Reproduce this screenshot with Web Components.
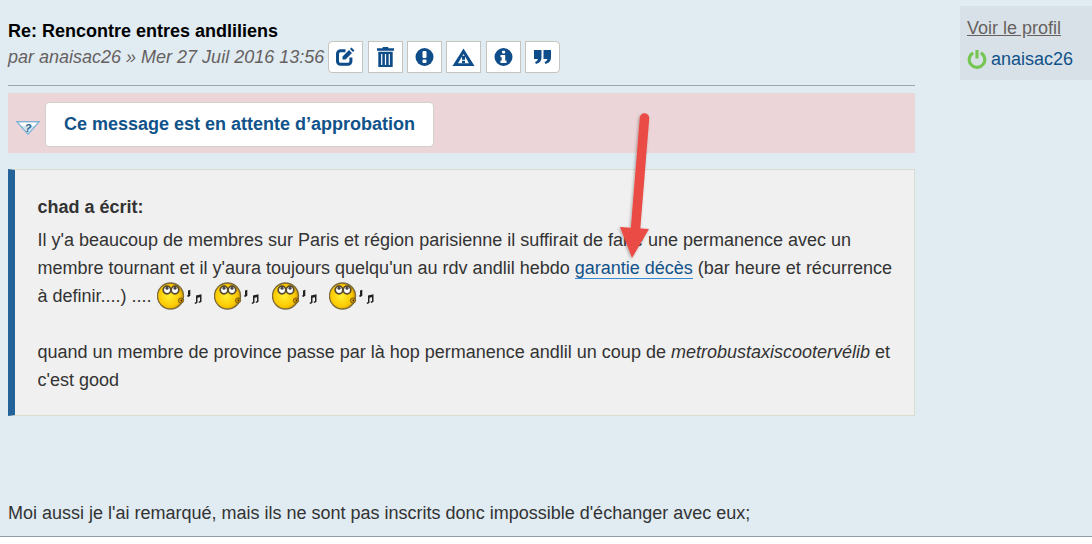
<!DOCTYPE html>
<html lang="fr">
<head>
<meta charset="utf-8">
<title>Re: Rencontre entres andliliens</title>
<style>
  html, body { margin: 0; height: 544px; overflow: hidden; background: #fff; }
  body { font-family: "Liberation Sans", Arial, sans-serif; }
</style>
</head>
<body>

<post-page>
  <post-head slot="main">
    <span slot="title">Re: Rencontre entres andliliens</span>
    <span slot="meta">par anaisac26 » Mer 27 Juil 2016 13:56</span>
    <icon-button icon="edit" first></icon-button>
    <icon-button icon="trash"></icon-button>
    <icon-button icon="bang"></icon-button>
    <icon-button icon="warn"></icon-button>
    <icon-button icon="info"></icon-button>
    <icon-button icon="quote" last></icon-button>
  </post-head>
  <approval-notice slot="main">Ce message est en attente d’approbation</approval-notice>
  <quote-box slot="main" author="chad a écrit:">
    Il y'a beaucoup de membres sur Paris et région parisienne il suffirait de faire une permanence avec un membre tournant et il y'aura toujours quelqu'un au rdv andlil hebdo <link-text>garantie décès</link-text> (bar heure et récurrence à definir....) .... <singing-smiley></singing-smiley> <singing-smiley></singing-smiley> <singing-smiley></singing-smiley> <singing-smiley></singing-smiley><br><br>quand un membre de province passe par là hop permanence andlil un coup de <i>metrobustaxiscootervélib</i> et c'est good
  </quote-box>
  <post-text slot="main">Moi aussi je l'ai remarqué, mais ils ne sont pas inscrits donc impossible d'échanger avec eux;</post-text>
  <profile-box slot="side" name="anaisac26"></profile-box>
</post-page>
<red-arrow></red-arrow>

<script>
class PostPage extends HTMLElement {
  constructor() {
    super();
    this.attachShadow({ mode: "open" }).innerHTML = `
    <style>
      :host {
        display: grid;
        grid-template-columns: 907px 132px;
        column-gap: 45px;
        height: 537px;
        padding-left: 8px;
        box-sizing: border-box;
        background: #e0ebf2;
        border-bottom: 1px solid #8f9da7;
        overflow: hidden;
      }
      .main { display: flex; flex-direction: column; }
      .side { padding-top: 6px; }
    </style>
    <div class="main"><slot name="main"></slot></div>
    <div class="side"><slot name="side"></slot></div>`;
  }
}

class PostHead extends HTMLElement {
  constructor() {
    super();
    this.attachShadow({ mode: "open" }).innerHTML = `
    <style>
      :host {
        display: block;
        height: 86px;
        padding-top: 21px;
        box-sizing: border-box;
        border-bottom: 1px solid #9aa7b0;
      }
      .title { font-size: 18px; font-weight: bold; color: #000; line-height: 20px; }
      .row { display: flex; align-items: center; gap: 4px; }
      .meta { font-size: 18px; font-style: italic; color: #66615f; }
      .buttons { display: flex; gap: 4.4px; }
    </style>
    <div class="title"><slot name="title"></slot></div>
    <div class="row">
      <div class="meta"><slot name="meta"></slot></div>
      <div class="buttons"><slot></slot></div>
    </div>`;
  }
}

const BLUE = "#0f4d8a";
const ICONS = {
  edit: `<path d="M11.500 4.800H6.500A3 3 0 0 0 3.500 7.800v7.400a3 3 0 0 0 3 3h7.400a3 3 0 0 0 3-3V11.500" fill="none" stroke="${BLUE}" stroke-width="3"/><path d="M8.500 10.500 15 4l3 3-6.500 6.500H8.500z M16 3l1.500-1.500 3 3L19 6z" fill="${BLUE}"/>`,
  trash: `<path d="M8.700 2.300V1h5.600v1.300H20v2.400H3V2.300z M4.300 5.800h14.400V21H4.300z" fill="${BLUE}"/><path d="M7.700 8v11M11.500 8v11M15.300 8v11" stroke="#fff" stroke-width="1.200"/>`,
  bang: `<circle cx="11.500" cy="11" r="9" fill="${BLUE}"/><rect x="9.500" y="5" width="4" height="7" rx="1" fill="#fff"/><rect x="9.500" y="13.500" width="4" height="3.400" rx="1" fill="#fff"/>`,
  warn: `<path d="M11.500 2.500 22.500 20H.5z" fill="${BLUE}"/><path d="M11.500 8 17 17.200H6z" fill="#fff"/><rect x="10" y="9.800" width="3" height="4" fill="${BLUE}"/><rect x="10" y="14.800" width="3" height="2.400" fill="${BLUE}"/>`,
  info: `<circle cx="11.500" cy="11" r="9" fill="${BLUE}"/><rect x="10" y="4.800" width="3.200" height="2.800" rx="1" fill="#fff"/><path d="M8.500 9h4.700v5.500h1.300v2.500h-6v-2.500h1.200v-3.200H8.500z" fill="#fff"/>`,
  quote: `<path d="M3 4h7.500v7c0 4-2 6-5.500 7l-1-2c1.800-.6 2.700-1.600 2.800-3H3z M12.500 4H20v7c0 4-2 6-5.500 7l-1-2c1.800-.6 2.700-1.600 2.800-3h-3.800z" fill="${BLUE}"/>`
};

class IconButton extends HTMLElement {
  constructor() {
    super();
    this.attachShadow({ mode: "open" });
  }
  connectedCallback() {
    const radius = this.hasAttribute("first") ? "4px 0 0 4px" : this.hasAttribute("last") ? "0 4px 4px 0" : "0";
    this.shadowRoot.innerHTML = `
    <style>
      :host {
        display: flex;
        align-items: center;
        justify-content: center;
        box-sizing: border-box;
        width: 35px;
        height: 32px;
        background: #fff;
        border: 1px solid #c7c3bf;
        border-radius: ${radius};
      }
      svg { width: 23px; height: 22px; display: block; }
    </style>
    <svg viewBox="0 0 23 22">${ICONS[this.getAttribute("icon")]}</svg>`;
  }
}

class ApprovalNotice extends HTMLElement {
  constructor() {
    super();
    this.attachShadow({ mode: "open" }).innerHTML = `
    <style>
      :host {
        display: flex;
        align-items: center;
        height: 60px;
        margin-top: 7px;
        background: #ecd5d8;
      }
      svg { width: 24px; height: 14px; margin: 9px 5px 0 8px; flex: none; }
      .label {
        box-sizing: border-box;
        height: 45px;
        line-height: 43px;
        margin-top: 3px;
        padding: 0 18px;
        background: #fff;
        border: 1px solid #d2cfcc;
        border-radius: 4px;
        font-size: 18px;
        font-weight: bold;
        color: #105289;
      }
    </style>
    <svg viewBox="0 0 24 14">
      <path d="M.7 .7h22.600L12 13.300z" fill="#cfe3f0" stroke="#7fb0d4" stroke-width="1.200"/>
      <path d="M3 1.800h18l-3 3.200H6z" fill="#fff"/>
      <text x="12" y="10.500" font-family="Liberation Sans, sans-serif" font-size="11" font-weight="bold" font-style="italic" text-anchor="middle" fill="#2a5f8c">?</text>
    </svg>
    <div class="label"><slot></slot></div>`;
  }
}

class QuoteBox extends HTMLElement {
  constructor() {
    super();
    this.attachShadow({ mode: "open" });
  }
  connectedCallback() {
    this.shadowRoot.innerHTML = `
    <style>
      :host {
        display: block;
        box-sizing: border-box;
        height: 247px;
        margin-top: 16px;
        padding: 24px 15px 0 22.500px;
        background: #f0f0f0;
        border: 1px solid #dbdbd0;
        border-left: 7px solid #23639a;
        font-size: 18px;
        line-height: 27.700px;
        color: #333;
      }
      .author { font-weight: bold; line-height: 27px; margin-bottom: 6px; }
    </style>
    <div class="author">${this.getAttribute("author")}</div>
    <div><slot></slot></div>`;
  }
}

class LinkText extends HTMLElement {
  constructor() {
    super();
    this.attachShadow({ mode: "open" }).innerHTML = `
    <style>
      :host { display: inline; color: #105289; border-bottom: 1px solid #368ad2; }
    </style>
    <slot></slot>`;
  }
}

class SingingSmiley extends HTMLElement {
  constructor() {
    super();
    this.attachShadow({ mode: "open" }).innerHTML = `
    <style>
      :host { display: inline-block; width: 46px; height: 28px; margin-right: 6.500px; vertical-align: -8px; }
      svg { display: block; width: 46px; height: 28px; }
    </style>
    <svg viewBox="0 0 46 28">
      <defs>
        <radialGradient id="g" cx="45%" cy="50%" r="60%">
          <stop offset="0" stop-color="#ffee30"/><stop offset=".7" stop-color="#fbc800"/><stop offset="1" stop-color="#b88000"/>
        </radialGradient>
      </defs>
      <ellipse cx="13.500" cy="14" rx="13" ry="13" fill="url(#g)" stroke="#7a6a3c" stroke-width="1.300"/>
      <circle cx="24" cy="18.500" r="2.600" fill="#d99a00" stroke="#5c4a20" stroke-width=".8"/>
      <circle cx="24.500" cy="18.500" r=".9" fill="#3a2a00"/>
      <circle cx="10" cy="8" r="3.800" fill="#fff" stroke="#574a30" stroke-width="1.700"/>
      <circle cx="18" cy="8" r="3.800" fill="#fff" stroke="#574a30" stroke-width="1.700"/>
      <circle cx="10" cy="6.300" r="1.500" fill="#444"/>
      <circle cx="18" cy="6.300" r="1.500" fill="#444"/>
      <path d="M31 8.500l2.300-.7v6l-2 1.300-1.500-1 1.200-1.200z" fill="#222"/>
      <path d="M39 13.500l5.500-1.200v7.500l-1.900 1.200-1.300-1 1.700-1v-3.800l-2.500.6v5l-1.900 1.200-1.300-1 1.700-1z" fill="#222"/>
    </svg>`;
  }
}

class PostText extends HTMLElement {
  constructor() {
    super();
    this.attachShadow({ mode: "open" }).innerHTML = `
    <style>
      :host {
        display: block;
        margin-top: 84px;
        font-size: 18px;
        line-height: 27px;
        color: #333;
      }
    </style>
    <slot></slot>`;
  }
}

class ProfileBox extends HTMLElement {
  constructor() {
    super();
    this.attachShadow({ mode: "open" });
  }
  connectedCallback() {
    this.shadowRoot.innerHTML = `
    <style>
      :host {
        display: block;
        box-sizing: border-box;
        height: 74px;
        padding: 9px 7px 0;
        background: #d9e1e8;
        font-size: 18px;
        line-height: 27px;
      }
      .link { color: #66615f; text-decoration: underline; }
      .user { display: flex; align-items: center; gap: 4px; margin-top: 4px; color: #105289; }
      svg { width: 20px; height: 20px; flex: none; margin-top: -2px; }
    </style>
    <div class="link">Voir le profil</div>
    <div class="user">
      <svg viewBox="0 0 20 20">
        <path d="M6.200 3.800a7.800 7.800 0 1 0 7.600 0" fill="none" stroke="#76c653" stroke-width="3.200"/>
        <path d="M10 1v8.500" fill="none" stroke="#76c653" stroke-width="3.200"/>
      </svg>
      <span>${this.getAttribute("name")}</span>
    </div>`;
  }
}

// annotation drawn on top of the screenshot
class RedArrow extends HTMLElement {
  constructor() {
    super();
    this.attachShadow({ mode: "open" }).innerHTML = `
    <style>
      :host { position: absolute; left: 600px; top: 105px; width: 90px; height: 170px; pointer-events: none; }
      svg { display: block; width: 90px; height: 170px; overflow: visible; }
    </style>
    <svg viewBox="0 0 90 170">
      <defs><filter id="s" x="-30%" y="-10%" width="160%" height="120%"><feDropShadow dx="-1" dy="1" stdDeviation="1.500" flood-color="#000" flood-opacity=".3"/></filter></defs>
      <g filter="url(#s)" fill="#ea4c45">
        <path d="M44.500 13 35.500 124" stroke="#ea4c45" stroke-width="9.500" stroke-linecap="round" fill="none"/>
        <path d="M20 122 L49 124 L32 153z"/>
      </g>
    </svg>`;
  }
}

customElements.define("post-page", PostPage);
customElements.define("post-head", PostHead);
customElements.define("icon-button", IconButton);
customElements.define("approval-notice", ApprovalNotice);
customElements.define("quote-box", QuoteBox);
customElements.define("link-text", LinkText);
customElements.define("singing-smiley", SingingSmiley);
customElements.define("post-text", PostText);
customElements.define("profile-box", ProfileBox);
customElements.define("red-arrow", RedArrow);
</script>
</body>
</html>
